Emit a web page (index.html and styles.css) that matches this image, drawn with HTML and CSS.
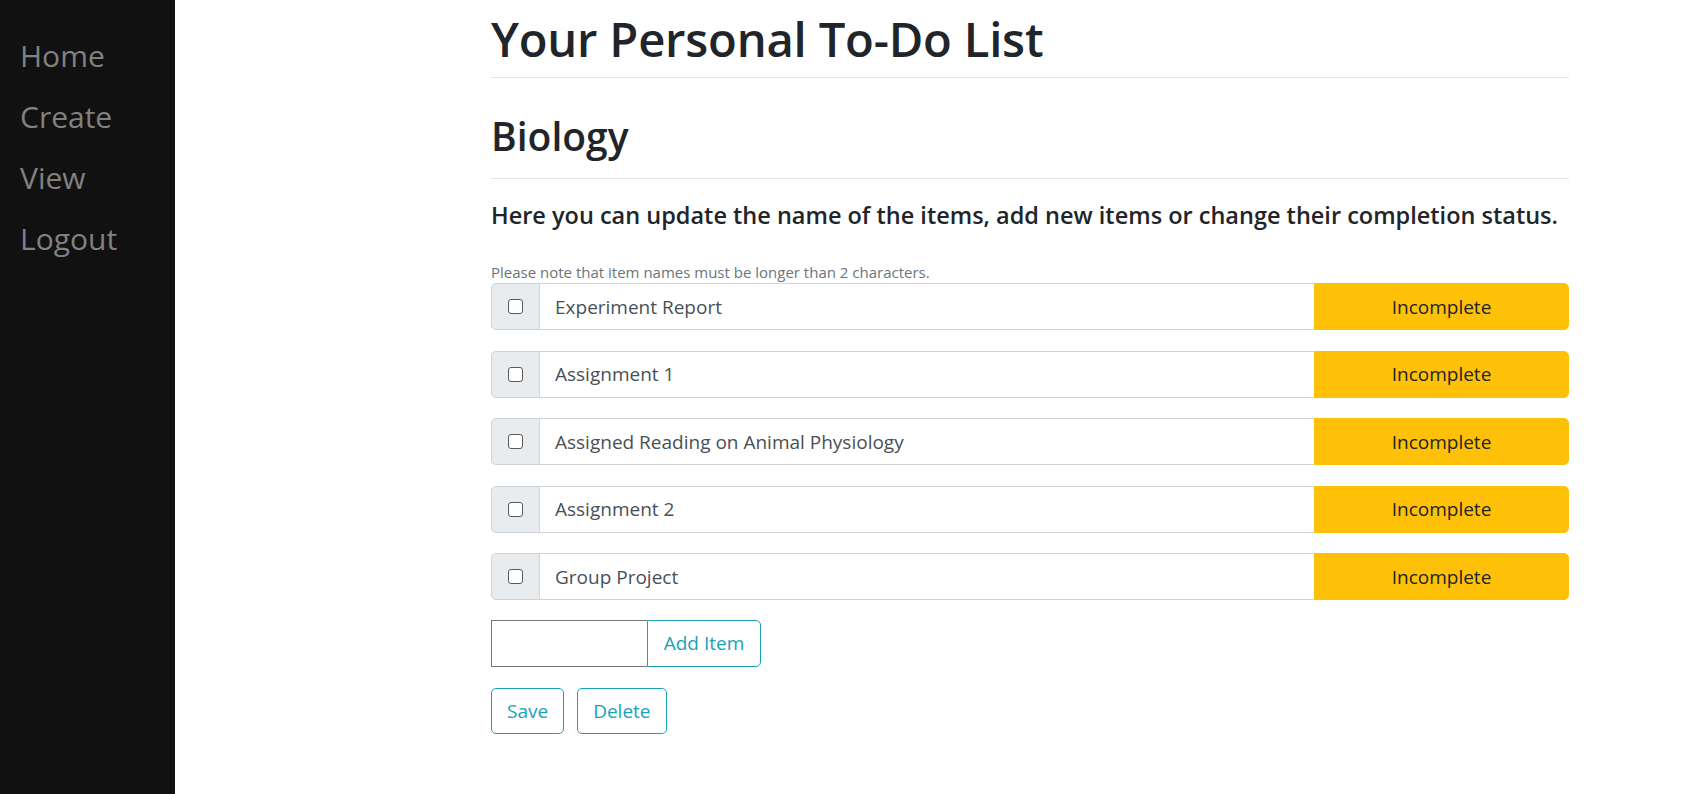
FILE: index.html
```html
<!DOCTYPE html>
<html lang="en">
<head>
<meta charset="utf-8">
<title>To-Do List</title>
<link rel="stylesheet" href="styles.css">
</head>
<body>
<nav class="sidenav">
  <a href="#">Home</a>
  <a href="#">Create</a>
  <a href="#">View</a>
  <a href="#">Logout</a>
</nav>
<main class="main">
  <div class="content">
    <h1 class="title">Your Personal To-Do List</h1>
    <hr class="rule">
    <h2 class="list-name">Biology</h2>
    <hr class="rule">
    <h5 class="lead-text">Here you can update the name of the items, add new items or change their completion status.</h5>
    <small class="note">Please note that item names must be longer than 2 characters.</small>
    <form class="items">
      <div class="item-row">
        <div class="addon"><input type="checkbox" class="check"></div>
        <input class="item-input" type="text" value="Experiment Report">
        <button type="button" class="status">Incomplete</button>
      </div>
      <div class="item-row">
        <div class="addon"><input type="checkbox" class="check"></div>
        <input class="item-input" type="text" value="Assignment 1">
        <button type="button" class="status">Incomplete</button>
      </div>
      <div class="item-row">
        <div class="addon"><input type="checkbox" class="check"></div>
        <input class="item-input" type="text" value="Assigned Reading on Animal Physiology">
        <button type="button" class="status">Incomplete</button>
      </div>
      <div class="item-row">
        <div class="addon"><input type="checkbox" class="check"></div>
        <input class="item-input" type="text" value="Assignment 2">
        <button type="button" class="status">Incomplete</button>
      </div>
      <div class="item-row">
        <div class="addon"><input type="checkbox" class="check"></div>
        <input class="item-input" type="text" value="Group Project">
        <button type="button" class="status">Incomplete</button>
      </div>
      <div class="add-row">
        <input class="new-item" type="text">
        <button type="button" class="btn-outline add-btn">Add Item</button>
      </div>
      <div class="actions">
        <button type="button" class="btn-outline">Save</button>
        <button type="button" class="btn-outline">Delete</button>
      </div>
    </form>
  </div>
</main>
</body>
</html>
```

FILE: styles.css
```css
* { box-sizing: border-box; }
html, body { margin: 0; padding: 0; height: 100%; }
body {
  font-family: "Open Sans", "Noto Sans", sans-serif;
  color: #212529;
  background: #fff;
  font-size: 20px;
  line-height: 1.5;
}
.sidenav {
  position: fixed;
  top: 0; left: 0;
  width: 175px;
  height: 100%;
  background: #111;
  padding-top: 25px;
}
.sidenav a {
  display: block;
  padding: 7px 10px 7px 20px;
  font-size: 30px;
  line-height: 47px;
  color: #818181;
  text-decoration: none;
}
.main {
  margin-left: 175px;
  padding-left: 316px;
}
.content {
  width: 1078px;
}
.title {
  margin: 0;
  padding-top: 9px;
  font-size: 47.2px;
  font-weight: 600;
  line-height: 60px;
  letter-spacing: -0.2px;
}
.rule {
  border: 0;
  border-top: 1px solid rgba(0,0,0,.1);
  margin: 8px 0 0;
}
.list-name {
  margin: 33px 0 0;
  font-size: 39px;
  font-weight: 600;
  line-height: 50px;
}
.list-name + .rule {
  margin-top: 17px;
}
.lead-text {
  margin: 21px 0 0;
  font-size: 23.5px;
  font-weight: 600;
  line-height: 30px;
}
.note {
  display: block;
  margin-top: 31px;
  font-size: 15px;
  line-height: 22px;
  color: #6c757d;
}
.items { margin: 0; }
.item-row {
  display: flex;
  height: 47px;
  margin-bottom: 20.5px;
}
.addon {
  width: 49px;
  flex: none;
  display: flex;
  align-items: center;
  justify-content: center;
  background: #e9ecef;
  border: 1px solid #ced4da;
  border-radius: 5px 0 0 5px;
}
.check {
  appearance: none;
  -webkit-appearance: none;
  margin: 0;
  width: 15px;
  height: 15px;
  border: 1.5px solid #5a5a5a;
  border-radius: 3px;
  background: #fff;
}
.item-input {
  flex: 1;
  min-width: 0;
  height: 47px;
  margin-left: -1px;
  padding: 0 15px;
  border: 1px solid #ced4da;
  border-right: 0;
  font-family: inherit;
  font-size: 19px;
  color: #495057;
  background: #fff;
  outline: none;
}
.status {
  width: 255px;
  flex: none;
  height: 47px;
  border: 1px solid #ffc107;
  background: #ffc107;
  color: #212529;
  font-family: inherit;
  font-size: 19px;
  border-radius: 0 5px 5px 0;
  padding: 0;
}
.add-row {
  display: flex;
  height: 47px;
  margin-top: -1px;
}
.new-item {
  width: 156px;
  height: 47px;
  border: 1px solid #767676;
  border-right: 0;
  padding: 0 8px;
  font-family: inherit;
  font-size: 19px;
  outline: none;
}
.btn-outline {
  height: 47px;
  border: 1px solid #17a2b8;
  border-radius: 5px;
  background: #fff;
  color: #17a2b8;
  font-family: inherit;
  font-size: 19px;
  padding: 0 15px;
}
.add-btn {
  width: 114px;
  padding: 0;
  border-radius: 0 5px 5px 0;
}
.actions {
  display: flex;
  gap: 13px;
  margin-top: 21px;
}
.actions .btn-outline {
  height: 46px;
  padding: 0 15px;
}
```
